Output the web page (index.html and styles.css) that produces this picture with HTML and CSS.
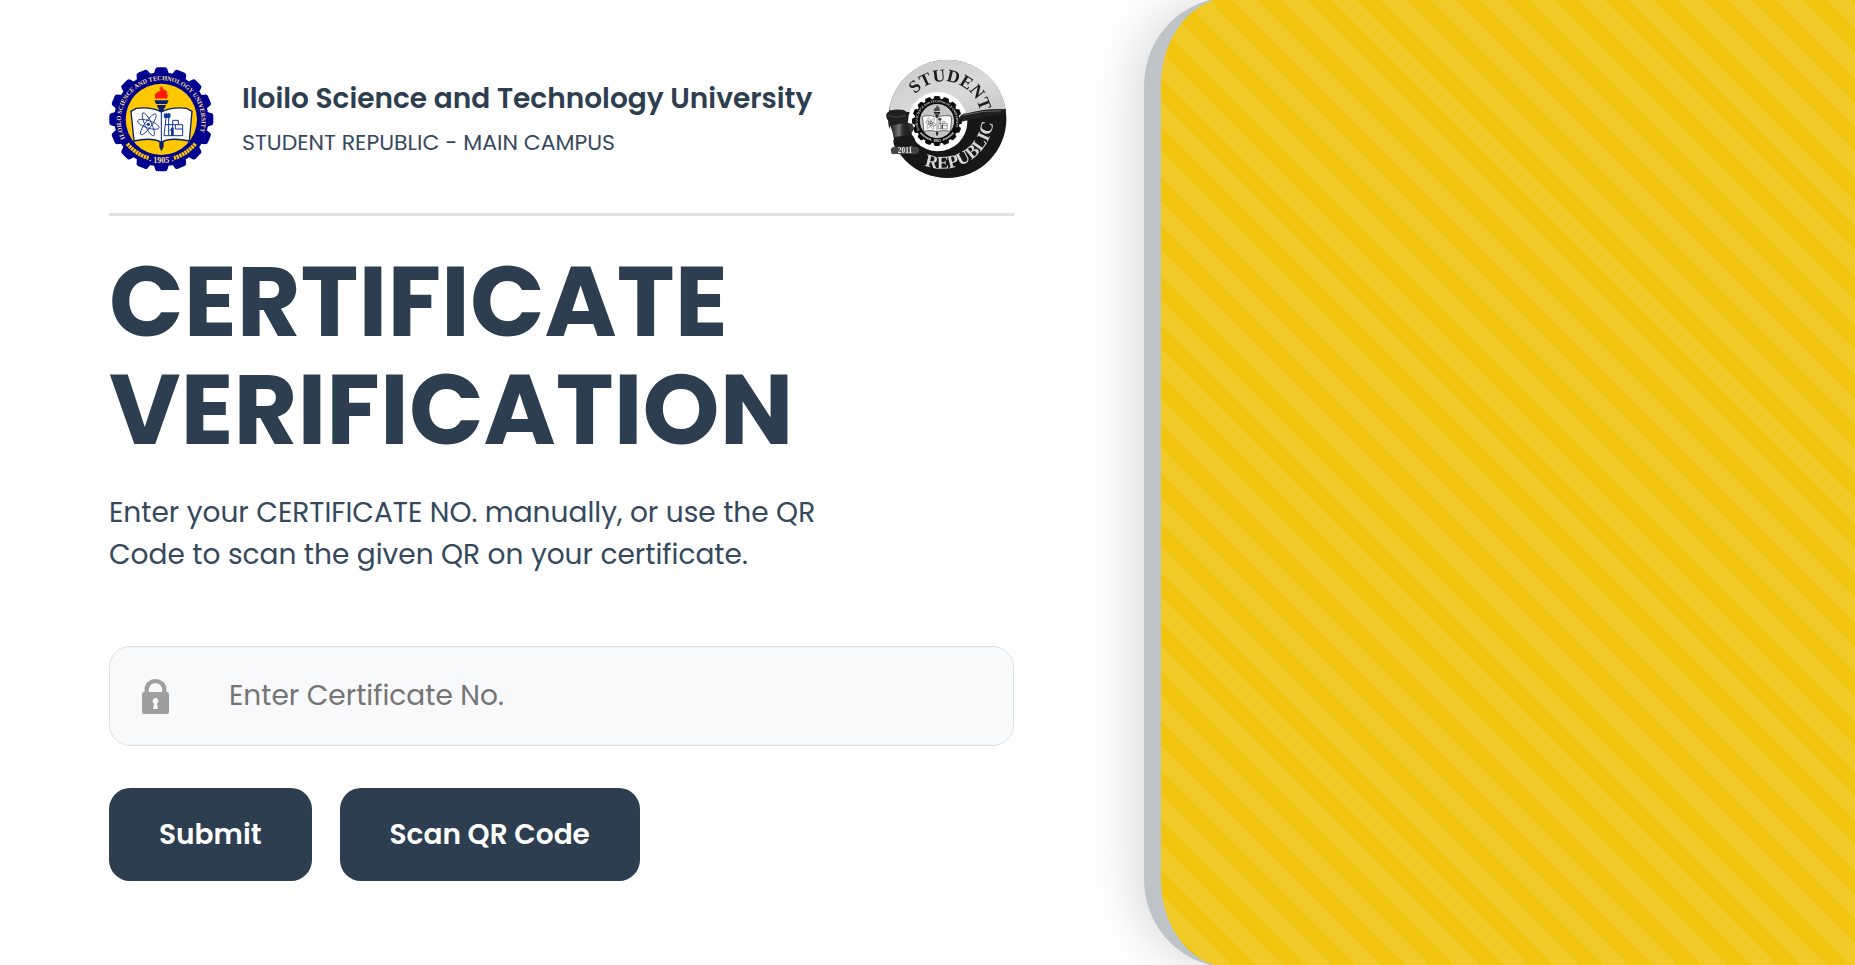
FILE: index.html
```html
<!DOCTYPE html>
<html lang="en">
<head>
<meta charset="utf-8">
<meta name="viewport" content="width=device-width, initial-scale=1">
<title>Certificate Verification</title>
<link rel="stylesheet" href="styles.css">
</head>
<body>
<div class="page">
  <main class="content">
    <header class="masthead">
      <svg class="seal" viewBox="27 36 315 315" role="img" aria-label="Iloilo Science and Technology University seal">
        <defs>
          <path id="tooth" d="M158 68 L166 42 Q168 37 173 37 H195 Q200 37 202 42 L210 68 Z"/>
          <g id="teeth4">
            <use href="#tooth"/>
            <use href="#tooth" transform="rotate(22.5 184 193)"/>
            <use href="#tooth" transform="rotate(45 184 193)"/>
            <use href="#tooth" transform="rotate(67.5 184 193)"/>
          </g>
          <path id="seal-arc" d="M75 250 A121 121 0 1 1 296 241 L286 270"/>
          <g id="gear">
            <g fill="#00008f">
              <use href="#teeth4"/>
              <use href="#teeth4" transform="rotate(90 184 193)"/>
              <use href="#teeth4" transform="rotate(180 184 193)"/>
              <use href="#teeth4" transform="rotate(270 184 193)"/>
              <circle cx="184" cy="193" r="141"/>
            </g>
            <circle cx="184" cy="193" r="107" fill="#ffc800"/>
            <text class="seal-name"><textPath href="#seal-arc">ILOILO SCIENCE AND TECHNOLOGY UNIVERSITY</textPath></text>
            <g fill="none" stroke="#ffc800" stroke-width="12" stroke-dasharray="7 2">
              <path d="M82 266 Q108 298 146 309"/>
              <path d="M286 266 Q260 298 222 309"/>
            </g>
            <text class="seal-year" x="184" y="324">· 1905 ·</text>
            <path d="M163 136 H206 L201 147 H168 Z M170 150 H199 L192 162 H176 Z M177 162 H191 V276 L184 289 L178 276 Z" fill="#0b1f70"/>
            <path d="M168 133 Q159 119 172 112 L183 106 Q172 98 188 94 Q184 101 195 105 Q206 110 199 118 Q208 118 200 131 Q190 128 184 131 Q176 128 168 133 Z" fill="#ff1a0a"/>
            <path d="M93 169 L108 160 Q155 155 184 171 Q215 155 260 160 L276 169 L268 258 Q210 246 184 262 Q156 246 102 258 Z" fill="#fff" stroke="#0b1f70" stroke-width="4"/>
            <path d="M184 171 V262" stroke="#0b1f70" stroke-width="3"/>
            <g fill="none" stroke="#14379a" stroke-width="2.5">
              <ellipse cx="145" cy="208" rx="34" ry="11" transform="rotate(18 145 208)"/>
              <ellipse cx="145" cy="208" rx="38" ry="10" transform="rotate(65 145 208)"/>
              <ellipse cx="145" cy="208" rx="38" ry="10" transform="rotate(-54 145 208)"/>
            </g>
            <circle cx="145" cy="208" r="5" fill="#14379a"/>
            <g fill="none" stroke="#14379a" stroke-width="3">
              <path d="M193 175 V187 H210 V175 M199 174 V186 M205 174 V186 M198 189 L192 242 H248 V209 H218 V196 H235 V209 M206 189 V242 M195 209 H218 V242 M226 209 V222 H248 M208 225 H218"/>
            </g>
            <path d="M193 176 H210 V189 H193 Z M213 218 H221 V242 H213 Z" fill="#14379a"/>
          </g>
        </defs>
        <use href="#gear"/>
      </svg>
      <div class="identity">
        <p class="school">Iloilo Science and Technology University</p>
        <p class="campus">STUDENT REPUBLIC - MAIN CAMPUS</p>
      </div>
      <svg class="badge" viewBox="33 27 366 360" role="img" aria-label="Student Republic logo">
        <defs>
          <linearGradient id="silver" x1="0" y1="0" x2="1" y2="1">
            <stop offset="0" stop-color="#c8c8c8"/>
            <stop offset=".6" stop-color="#dadada"/>
            <stop offset="1" stop-color="#c4c4c4"/>
          </linearGradient>
          <linearGradient id="wood" x1="0" y1="0" x2="1" y2="0">
            <stop offset="0" stop-color="#151515"/>
            <stop offset=".4" stop-color="#777"/>
            <stop offset=".6" stop-color="#2a2a2a"/>
            <stop offset="1" stop-color="#161616"/>
          </linearGradient>
          <path id="arc-top" d="M121 133 A112 112 0 0 1 309 162 L335 230"/>
          <path id="arc-bottom" d="M148 346 A154 154 0 0 0 356 204 L352 150"/>
        </defs>
        <circle cx="217" cy="207" r="177" fill="#171717"/>
        <path d="M42 181 A177 177 0 0 1 392 178 L260 200 Z" fill="url(#silver)"/>
        <circle cx="188" cy="215" r="89" fill="#fff"/>
        <use class="mono" href="#gear" transform="translate(97.700 120.400) scale(.48)"/>
        <path d="M252 207 Q256 190 277 190 Q334 174 394 178 Q390 192 364 196 Q318 202 268 213 Q256 218 252 207 Z" fill="#202020"/>
        <path d="M263 196 Q320 181 378 182" fill="none" stroke="#666" stroke-width="3"/>
        <path d="M35 262 L46 226 L104 214 L112 290 H60 Z" fill="#fff"/>
        <path d="M35 190 Q50 174 86 180 Q98 184 93 200 L97 208 Q101 218 93 222 L50 228 Q38 228 41 214 Q30 202 35 190 Z" fill="#202020"/>
        <path d="M40 196 Q60 206 92 197" fill="none" stroke="#4a4a4a" stroke-width="3"/>
        <path d="M46 227 L99 217 Q112 232 110 256 L56 265 Q54 246 46 227 Z" fill="url(#wood)"/>
        <path d="M98 219 L111 221 Q120 233 112 246 L106 251 Z" fill="#333"/>
        <path d="M58 262 L108 253 Q122 262 122 286 L66 300 Q50 282 58 262 Z" fill="#191919"/>
        <path d="M47 300 Q48 291 60 290 H122 Q131 291 132 300 Q133 311 122 312 H50 Z" fill="#454545"/>
        <text class="badge-year" x="90" y="308">2011</text>
        <text class="badge-top"><textPath href="#arc-top">STUDENT</textPath></text>
        <text class="badge-bottom"><textPath href="#arc-bottom">REPUBLIC</textPath></text>
      </svg>
    </header>

    <h1 class="title">CERTIFICATE<br>VERIFICATION</h1>
    <p class="intro">Enter your CERTIFICATE NO. manually, or use the QR<br>Code to scan the given QR on your certificate.</p>

    <form class="form">
      <label class="field">
        <svg class="lock" viewBox="0 0 27 35" role="img" aria-label="Certificate number">
          <path fill="#9e9e9e" fill-rule="evenodd" d="M2.500 13 V10.500 A11 10.500 0 0 1 24.500 10.500 V13 H25 Q27 13 27 15 V33 Q27 35 25 35 H2 Q0 35 0 33 V15 Q0 13 2 13 Z M6.700 13 H20.300 V11 A6.800 7 0 0 0 6.700 11 Z M11 30 L12 24.500 A2.900 2.900 0 1 1 15 24.500 L16 30 Z"/>
        </svg>
        <input class="input" type="text" placeholder="Enter Certificate No.">
      </label>
      <div class="actions">
        <button class="btn" type="submit">Submit</button>
        <button class="btn" type="button">Scan QR Code</button>
      </div>
    </form>
  </main>
  <aside class="panel" aria-hidden="true"></aside>
</div>
</body>
</html>
```

FILE: styles.css
```css
* {
  box-sizing: border-box;
}

body {
  margin: 0;
  background: #fff;
  color: #2c3e50;
  font-family: Poppins, Inter, "Open Sans", sans-serif;
}

.page {
  display: grid;
  grid-template-columns: 37fr 23fr;
  min-height: 100vh;
  overflow: hidden;
}

.content {
  padding: 59px 130px 60px 109px;
}

.masthead {
  display: flex;
  align-items: center;
  gap: 28px;
  padding-bottom: 34px;
  border-bottom: 3px solid #e0e0e0;
}

.seal {
  flex: none;
  width: 105px;
  height: 105px;
}

.badge {
  flex: none;
  width: 122px;
  height: 120px;
  margin-right: 6px;
}

.identity {
  flex: 1;
  white-space: nowrap;
}

.school,
.campus {
  margin: 0;
}

.school {
  font-size: 28px;
  font-weight: 600;
  line-height: 48px;
}

.campus {
  font-size: 22px;
  line-height: 40px;
  color: #34495e;
}

.title {
  margin: 32px 0 0;
  font-size: 98px;
  font-weight: 700;
  line-height: 108px;
}

.intro {
  margin: 28px 0 0;
  font-size: 28px;
  line-height: 42px;
  color: #34495e;
}

.form {
  margin-top: 70px;
}

.field {
  display: flex;
  align-items: center;
  gap: 60px;
  height: 100px;
  padding: 0 32px;
  border: 1px solid #e0e0e0;
  border-radius: 21px;
  background: #f8f9fb;
}

.lock {
  flex: none;
  width: 27px;
  height: 35px;
}

.input {
  flex: 1;
  min-width: 0;
  padding: 0;
  border: 0;
  outline: 0;
  background: none;
  color: #2c3e50;
  font: inherit;
  font-size: 28px;
}

.input::placeholder {
  color: #757575;
}

.actions {
  display: flex;
  gap: 28px;
  margin-top: 42px;
}

.btn {
  padding: 0 50px;
  border: 0;
  border-radius: 21px;
  background: #2c3e50;
  color: #fff;
  font: inherit;
  font-size: 28px;
  font-weight: 600;
  line-height: 93px;
}

.panel {
  margin: -3px 0;
  border-left: 17px solid #bdc3c7;
  border-radius: 88px 0 0 88px;
  background: repeating-linear-gradient(45deg, #f1ca27 0 18px, #f1c40f 18px 35px);
  box-shadow: -9px 0 52px rgba(0, 0, 0, 0.15);
}

.seal-name,
.seal-year,
.badge-year,
.badge-top,
.badge-bottom {
  font-family: "Liberation Serif", serif;
  font-weight: 700;
}

.seal-name {
  font-size: 19px;
  fill: #ffe08a;
}

.seal-year {
  font-size: 24px;
  text-anchor: middle;
  fill: #ffe08a;
}

.mono {
  filter: grayscale(1);
}

.badge-year {
  font-size: 22px;
  text-anchor: middle;
  fill: #eee;
}

.badge-top {
  font-size: 53px;
  fill: #1c1c1c;
}

.badge-bottom {
  font-size: 54px;
  fill: #d8d8d8;
}
```
